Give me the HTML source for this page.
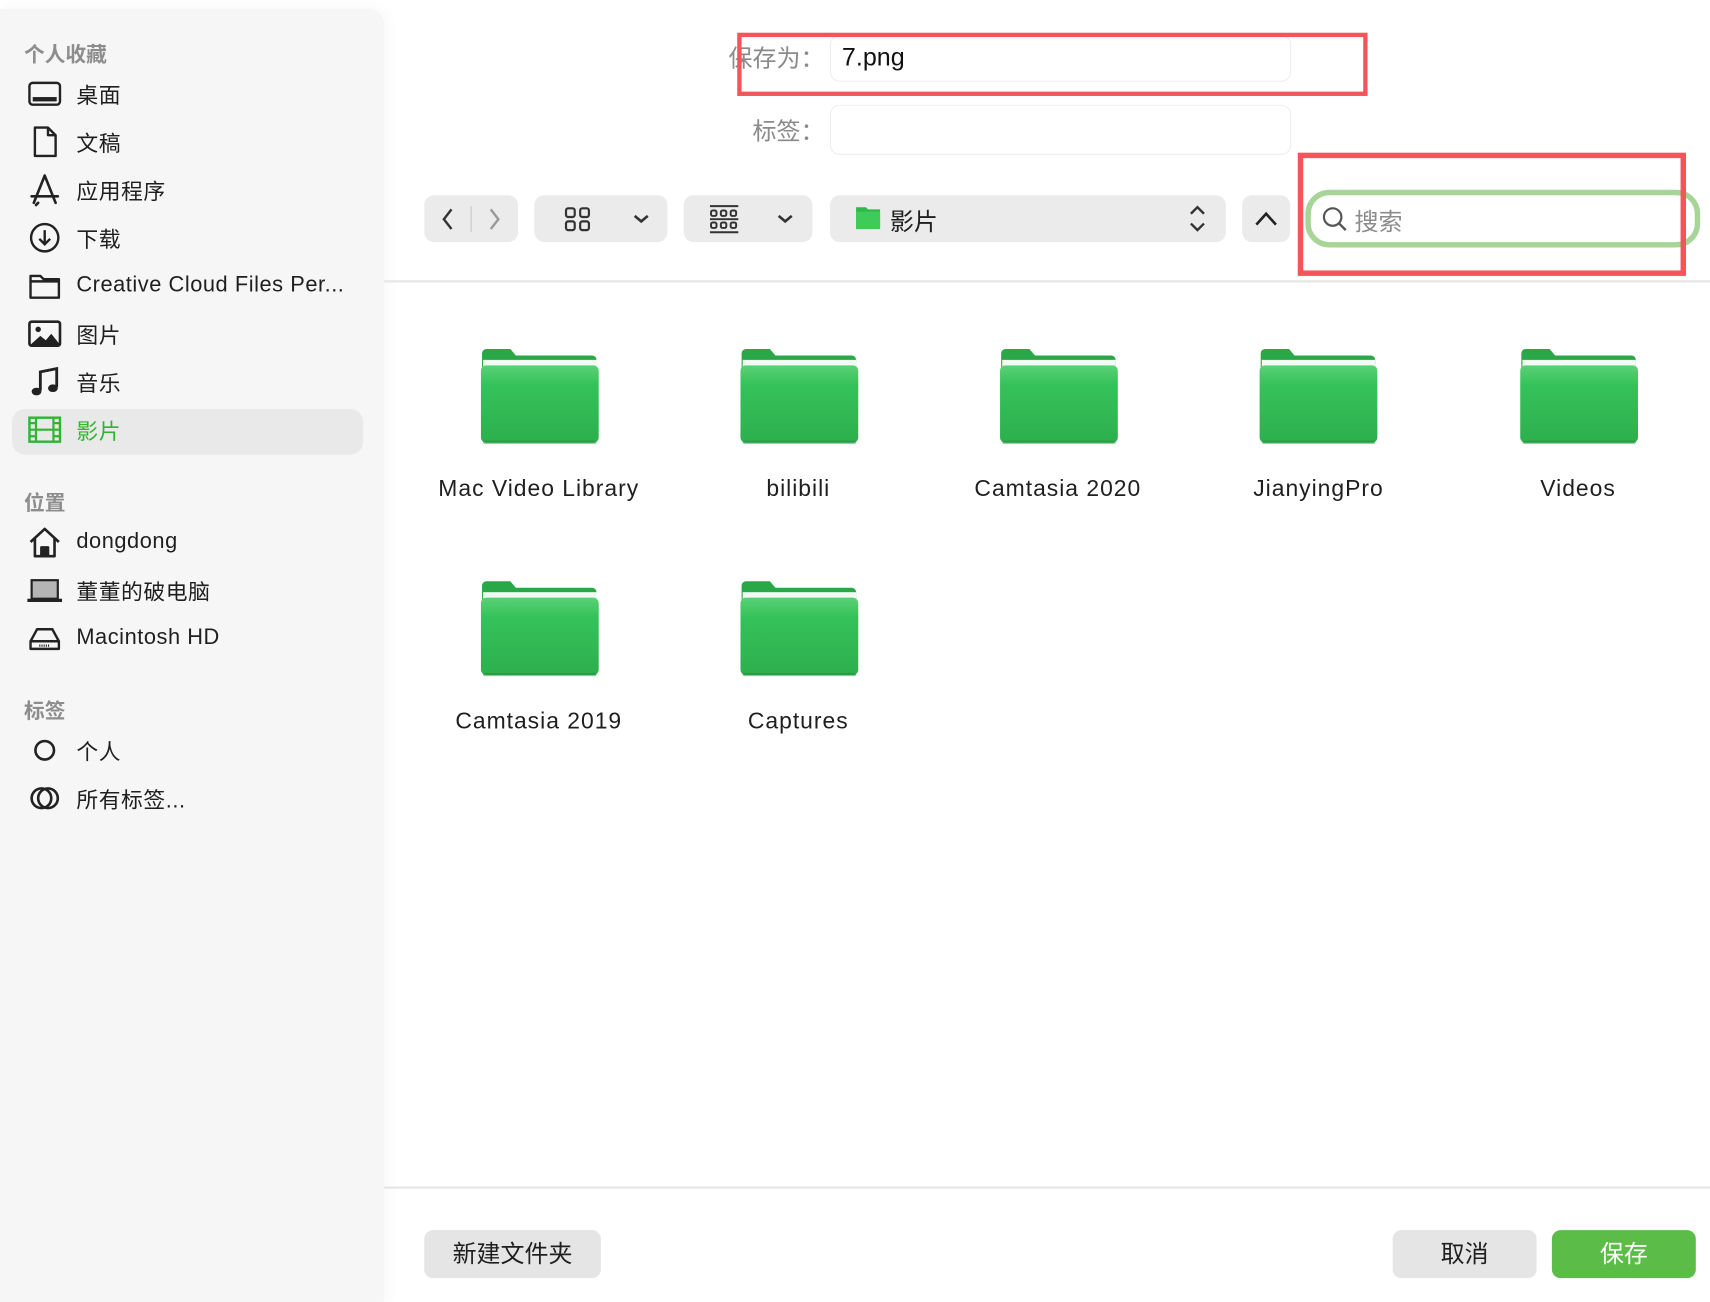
<!DOCTYPE html>
<html><head><meta charset="utf-8"><style>
*{margin:0;padding:0;box-sizing:border-box}
html,body{width:1710px;height:1302px;overflow:hidden;background:#fff}
body{font-family:"Liberation Sans","Noto Sans CJK SC",sans-serif}
#s{position:absolute;left:0;top:0;width:1568px;height:1194px;transform:scale(1.09056);transform-origin:0 0;background:#fff}
.a{position:absolute}
.side{left:0;top:8px;width:352px;height:1186px;background:#f5f6f5;border-top-right-radius:14px;box-shadow:4px 0 14px rgba(0,0,0,0.03)}
.hd{position:absolute;left:22px;font-size:19px;color:#8d8d8d;font-weight:bold;transform:translateY(-50%)}
.it{position:absolute;left:70px;font-size:20px;color:#1f1f1f;transform:translateY(-50%);white-space:nowrap;letter-spacing:0.5px}
.ic{position:absolute;left:25px;width:32px;height:32px;transform:translateY(-50%)}
.btn{position:absolute;background:#ebebeb;border-radius:9px;height:43px;top:179px}
.lab{position:absolute;font-size:22px;color:#8a8a8a;transform:translateY(-50%)}
.inp{position:absolute;left:761px;width:423px;border:1.5px solid #eeeeee;border-radius:9px;background:#fff}
.fn{position:absolute;width:260px;text-align:center;font-size:21px;color:#1f1f1f;transform:translate(-50%,-50%);white-space:nowrap;letter-spacing:0.9px}
.fd{position:absolute;width:110px;height:90px;transform:translateX(-50%)}
.bb{position:absolute;top:1128px;height:44px;border-radius:8px;background:#e5e5e5;font-size:22px;text-align:center;line-height:44px;color:#1f1f1f}
</style></head><body><div id="s">
<div class="a side"></div>
<div class="hd" style="top:49px">个人收藏</div>
<svg class="ic" style="top:86px" viewBox="0 0 32 32"><rect x="2" y="6" width="28" height="20" rx="3" fill="none" stroke="#222" stroke-width="2.2"/><rect x="5" y="19" width="22" height="4" fill="#222"/></svg>
<div class="it" style="top:86px">桌面</div>
<svg class="ic" style="top:130px" viewBox="0 0 32 32"><path d="M7 3h12l7 7v19H7z M19 3v7h7" fill="none" stroke="#222" stroke-width="2.2" stroke-linejoin="round"/></svg>
<div class="it" style="top:130px">文稿</div>
<svg class="ic" style="top:174px" viewBox="0 0 32 32"><path d="M16 3L6 28M16 3l10 25M4 22h24M10 28l-2 2" fill="none" stroke="#222" stroke-width="2.4" stroke-linecap="round"/></svg>
<div class="it" style="top:174px">应用程序</div>
<svg class="ic" style="top:218px" viewBox="0 0 32 32"><circle cx="16" cy="16" r="12.5" fill="none" stroke="#222" stroke-width="2.2"/><path d="M16 9v13M11 17l5 5 5-5" fill="none" stroke="#222" stroke-width="2.2"/></svg>
<div class="it" style="top:218px">下载</div>
<svg class="ic" style="top:262px" viewBox="0 0 32 32"><path d="M3 7h9l3 3h14v17H3z M3 12h26" fill="none" stroke="#222" stroke-width="2.2" stroke-linejoin="round"/></svg>
<div class="it" style="top:262px">Creative Cloud Files Per...</div>
<svg class="ic" style="top:306px" viewBox="0 0 32 32"><rect x="2" y="5" width="28" height="22" rx="2" fill="none" stroke="#222" stroke-width="2.4"/><circle cx="10" cy="12" r="2.5" fill="#222"/><path d="M3 26l9-8 5 4 5-6 8 10z" fill="#222"/></svg>
<div class="it" style="top:306px">图片</div>
<svg class="ic" style="top:350px" viewBox="0 0 32 32"><path d="M12 24V7l15-3v17" fill="none" stroke="#222" stroke-width="2.6"/><ellipse cx="8.5" cy="25" rx="4.5" ry="3.5" fill="#222"/><ellipse cx="23.5" cy="22" rx="4.5" ry="3.5" fill="#222"/></svg>
<div class="it" style="top:350px">音乐</div>
<div class="a" style="left:11px;top:375px;width:322px;height:42px;background:#e8e9e8;border-radius:12px"></div>
<svg class="ic" style="top:394px" viewBox="0 0 32 32"><rect x="2" y="5" width="28" height="22" fill="none" stroke="#2fb52f" stroke-width="2.2"/><path d="M8 5v22M24 5v22M8 16h16M2 10h6M2 16h6M2 22h6M24 10h6M24 16h6M24 22h6" stroke="#2fb52f" stroke-width="2"/></svg>
<div class="it" style="top:394px;color:#2fb52f">影片</div>
<div class="hd" style="top:460px">位置</div>
<svg class="ic" style="top:497px" viewBox="0 0 32 32"><path d="M3 16L16 4l13 12M7 13v16h18V13M13 29v-8h6v8" fill="none" stroke="#222" stroke-width="2.4" stroke-linejoin="round"/><rect x="12" y="21" width="7" height="8" fill="#222"/></svg>
<div class="it" style="top:497px">dongdong</div>
<svg class="ic" style="top:541px" viewBox="0 0 32 32"><rect x="4" y="7" width="24" height="17" fill="#b5b5b5" stroke="#222" stroke-width="2"/><rect x="0" y="24" width="32" height="3" fill="#222"/></svg>
<div class="it" style="top:541px">董董的破电脑</div>
<svg class="ic" style="top:585px" viewBox="0 0 32 32"><path d="M3 19L9 8h14l6 11v7H3z M3 19h26" fill="none" stroke="#222" stroke-width="2.2" stroke-linejoin="round"/><path d="M11 23h10" stroke="#222" stroke-width="2" stroke-dasharray="1 1"/></svg>
<div class="it" style="top:585px">Macintosh HD</div>
<div class="hd" style="top:651px">标签</div>
<svg class="ic" style="top:688px" viewBox="0 0 32 32"><circle cx="16" cy="16" r="8.5" fill="none" stroke="#222" stroke-width="2.4"/></svg>
<div class="it" style="top:688px">个人</div>
<svg class="ic" style="top:732px" viewBox="0 0 32 32"><circle cx="13" cy="16" r="9" fill="none" stroke="#222" stroke-width="2.4"/><circle cx="19" cy="16" r="9" fill="none" stroke="#222" stroke-width="2.4"/></svg>
<div class="it" style="top:732px">所有标签...</div>

<div class="lab" style="left:668px;top:52px">保存为：</div>
<div class="inp" style="top:32px;height:43px"><span style="position:absolute;left:10px;top:6px;font-size:23px;color:#111">7.png</span></div>
<div class="a" style="left:676px;top:30px;width:578px;height:58px;border:4px solid #f5555a"></div>
<div class="lab" style="left:690px;top:119px">标签：</div>
<div class="inp" style="top:96px;height:46px"></div>

<div class="btn" style="left:389px;width:86px"><svg class="a" style="left:0;top:0" width="86" height="43"><path d="M25 13l-7 9 7 9" fill="none" stroke="#333" stroke-width="2.2"/><path d="M43 10v24" stroke="#d3d3d3" stroke-width="1.5"/><path d="M61 13l7 9-7 9" fill="none" stroke="#999" stroke-width="2.2"/></svg></div>
<div class="btn" style="left:490px;width:122px"><svg class="a" style="left:0;top:0" width="122" height="43"><g fill="none" stroke="#333" stroke-width="2"><rect x="29" y="12" width="8" height="8" rx="2"/><rect x="42" y="12" width="8" height="8" rx="2"/><rect x="29" y="24" width="8" height="8" rx="2"/><rect x="42" y="24" width="8" height="8" rx="2"/><path d="M92 19l6 5 6-5" stroke-width="2.4"/></g></svg></div>
<div class="btn" style="left:627px;width:118px"><svg class="a" style="left:0;top:0" width="118" height="43"><g fill="none" stroke="#333" stroke-width="1.8"><path d="M24 10h26M24 22h26M24 34h26"/><rect x="25" y="14" width="5" height="5" rx="1.5"/><rect x="34" y="14" width="5" height="5" rx="1.5"/><rect x="43" y="14" width="5" height="5" rx="1.5"/><rect x="25" y="25" width="5" height="5" rx="1.5"/><rect x="34" y="25" width="5" height="5" rx="1.5"/><rect x="43" y="25" width="5" height="5" rx="1.5"/><path d="M87 19l6 5 6-5" stroke-width="2.4"/></g></svg></div>
<div class="btn" style="left:761px;width:363px"><svg class="a" style="left:0;top:0" width="363" height="43"><path d="M24 11h9l2 2h11v18H24z" fill="#2fb84a"/><rect x="24" y="15" width="22" height="16" rx="1" fill="#3ecb5a"/><path d="M331 17l6-6 6 6M331 26l6 6 6-6" fill="none" stroke="#333" stroke-width="2.2"/></svg><span style="position:absolute;left:55px;top:7px;font-size:22px;color:#1f1f1f">影片</span></div>
<div class="btn" style="left:1139px;width:44px"><svg class="a" style="left:0;top:0" width="44" height="43"><path d="M13 27l9-10 9 10" fill="none" stroke="#222" stroke-width="2.4"/></svg></div>
<div class="a" style="left:1197px;top:174px;width:362px;height:53px;border:5px solid #a6d597;border-radius:22px;background:#fff"></div>
<svg class="a" style="left:1210px;top:187px" width="28" height="28"><circle cx="12" cy="12" r="8" fill="none" stroke="#555" stroke-width="2"/><path d="M18 18l6 6" stroke="#555" stroke-width="2.2"/></svg>
<div class="a" style="left:1242px;top:186px;font-size:22px;color:#8c8c8c">搜索</div>
<div class="a" style="left:1190px;top:140px;width:356px;height:113px;border:5px solid #f5555a"></div>
<div class="a" style="left:352px;top:257px;width:1216px;height:2px;background:#e6e6e6"></div>

<svg width="0" height="0" style="position:absolute"><defs>
<linearGradient id="g" x1="0" y1="0" x2="0" y2="1"><stop offset="0" stop-color="#5bd176"/><stop offset="0.25" stop-color="#35c25a"/><stop offset="1" stop-color="#2daf4e"/></linearGradient>
<symbol id="f" viewBox="0 0 110 90"><path d="M2 6a4 4 0 0 1 4-4h22l5 6h70a4 4 0 0 1 4 4v70H2z" fill="#2aa848"/><rect x="3" y="12" width="104" height="8" fill="#f2fbf3"/><rect x="1" y="17" width="108" height="71" rx="5" fill="url(#g)"/><rect x="3" y="86" width="104" height="3" rx="1.5" fill="#1f8f3a" opacity=".5"/></symbol>
</defs></svg>
<svg class="fd" style="left:495px;top:318px"><use href="#f"/></svg>
<svg class="fd" style="left:733px;top:318px"><use href="#f"/></svg>
<svg class="fd" style="left:971px;top:318px"><use href="#f"/></svg>
<svg class="fd" style="left:1209px;top:318px"><use href="#f"/></svg>
<svg class="fd" style="left:1448px;top:318px"><use href="#f"/></svg>
<svg class="fd" style="left:495px;top:531px"><use href="#f"/></svg>
<svg class="fd" style="left:733px;top:531px"><use href="#f"/></svg>
<div class="fn" style="left:494px;top:449px">Mac Video Library</div>
<div class="fn" style="left:732px;top:449px">bilibili</div>
<div class="fn" style="left:970px;top:449px">Camtasia 2020</div>
<div class="fn" style="left:1209px;top:449px">JianyingPro</div>
<div class="fn" style="left:1447px;top:449px">Videos</div>
<div class="fn" style="left:494px;top:662px">Camtasia 2019</div>
<div class="fn" style="left:732px;top:662px">Captures</div>

<div class="a" style="left:352px;top:1088px;width:1216px;height:2px;background:#e6e6e6"></div>
<div class="bb" style="left:389px;width:162px">新建文件夹</div>
<div class="bb" style="left:1277px;width:132px">取消</div>
<div class="bb" style="left:1423px;width:132px;background:#5bbd47;color:#fff">保存</div>
</div></body></html>
